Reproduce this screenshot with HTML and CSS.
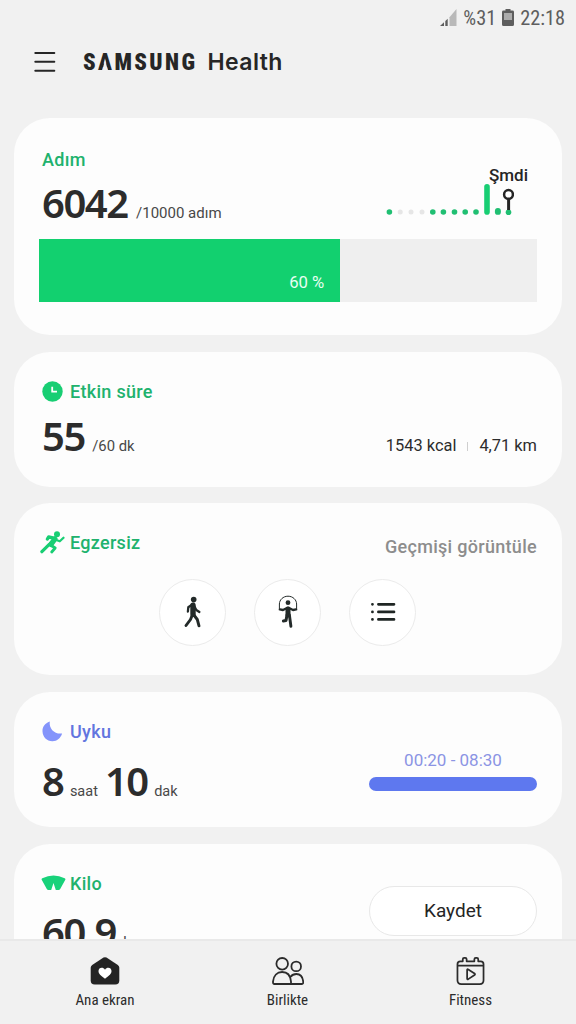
FILE: index.html
```html
<!DOCTYPE html>
<html lang="tr">
<head>
<meta charset="utf-8">
<title>Samsung Health</title>
<link rel="stylesheet" href="styles.css">
</head>
<body>
<div class="app">
  <div class="status">
    <svg class="signal" width="18" height="18" viewBox="0 0 18 18"><path d="M0 17L4 13.3V17Z" fill="#5e5e5e"/><path d="M5.3 12L7.7 9.7V17H5.3Z" fill="#5e5e5e"/><path d="M9.5 8.2L16.5 0V17H9.5Z" fill="#b9b9b9"/></svg>
    <span class="status-text">%31</span>
    <svg class="battery" width="12" height="17" viewBox="0 0 12 17"><path d="M3.5 1.6V0H8.5V1.6H10.5Q12 1.6 12 3V15.4Q12 17 10.5 17H1.5Q0 17 0 15.4V3Q0 1.6 1.5 1.6Z" fill="#5e5e5e"/><rect x="2" y="4" width="8" height="7" fill="#acacac"/></svg>
    <span class="status-text">22:18</span>
  </div>

  <header class="header">
    <svg width="22" height="20" viewBox="0 0 22 20" fill="none" stroke="#262626" stroke-width="2" stroke-linecap="round"><path d="M1.3 1H20.3M1.3 9.8H20.3M1.3 18.7H20.3"/></svg>
    <h1 class="logo"><span class="brand">S<span class="peak">A</span>MSUNG</span><span class="product">Health</span></h1>
  </header>

  <main class="cards">
    <section class="card steps">
      <div class="steps-top">
        <div>
          <h2 class="title green">Adım</h2>
          <div class="value"><b class="num">6042</b><span class="unit goal">/10000 adım</span></div>
        </div>
        <div class="trend">
          <span class="now">Şmdi</span>
          <svg width="130" height="34" viewBox="0 0 130 34"><g fill="#20bf72"><circle cx="5.4" cy="28" r="2.8"/><circle cx="48.8" cy="28" r="2.8"/><circle cx="59.4" cy="28" r="2.8"/><circle cx="70.5" cy="28" r="2.8"/><circle cx="81.2" cy="28" r="2.8"/><circle cx="92" cy="28" r="2.8"/><rect x="100.2" y="0" width="5.6" height="30.7" rx="2.8" fill="#18ce73"/><rect x="110.9" y="24" width="6" height="6.8" rx="2.9"/><circle cx="124.5" cy="28.3" r="2.8"/></g><g fill="#e6e6e6"><circle cx="16.2" cy="28" r="2.5"/><circle cx="27" cy="28" r="2.5"/><circle cx="38" cy="28" r="2.5"/></g><path d="M124.6 15V26" stroke="#252525" stroke-width="3"/><circle cx="124.5" cy="10.4" r="4.4" fill="#fff" stroke="#252525" stroke-width="2.5"/></svg>
        </div>
      </div>
      <div class="progress"><div class="fill" style="width:60.4%">60 %</div></div>
    </section>

    <section class="card active">
      <h2 class="title green"><svg width="21" height="21" viewBox="0 0 21 21"><circle cx="10.5" cy="10.5" r="10.2" fill="#18ce73"/><path d="M10.2 5.7V10.6H15" fill="none" stroke="#fff" stroke-width="1.8"/></svg><span>Etkin süre</span></h2>
      <div class="line">
        <div class="value"><b class="num">55</b><span class="unit">/60 dk</span></div>
        <div class="stats"><span>1543 kcal</span><i></i><span>4,71 km</span></div>
      </div>
    </section>

    <section class="card exercise">
      <div class="line ex-head">
        <h2 class="title green"><svg class="run" width="25" height="23" viewBox="0 0 25 23" fill="none" stroke="#18ce73" stroke-linecap="round" stroke-linejoin="round"><circle cx="17" cy="3.2" r="3" fill="#18ce73" stroke="none"/><path d="M14.7 7.2L9.5 13.2L1.9 20.7" stroke-width="3.2"/><path d="M15 8L11 13.5" stroke-width="5"/><path d="M10.5 14L15.2 17L11.7 21" stroke-width="2.8"/><path d="M15.5 8.8L19.8 10.3L23.5 6.7" stroke-width="2.2"/><path d="M14 7.2L8.6 6L7.4 8" stroke-width="3.4"/></svg><span>Egzersiz</span></h2>
        <span class="history">Geçmişi görüntüle</span>
      </div>
      <div class="actions">
        <div class="round"><svg width="20" height="34" viewBox="0 0 20 34" fill="none" stroke="#232a29" stroke-linecap="round" stroke-linejoin="round"><circle cx="10.7" cy="4.6" r="2.8" fill="#232a29" stroke="none"/><path d="M10 10.2V19" stroke-width="5.4"/><path d="M9 9.6L5.3 12.3L4.9 16.5M11.5 11.5L13.3 15L16.4 17" stroke-width="2.3"/><path d="M9.5 19.5L7.5 24.5L3 30.5M10.5 19.5L14.3 24.5L16 30.8" stroke-width="2.9"/></svg></div>
        <div class="round"><svg width="20" height="34" viewBox="0 0 20 34" fill="none" stroke="#232a29" stroke-linecap="round" stroke-linejoin="round"><circle cx="10" cy="7.7" r="2.4" fill="#232a29" stroke="none"/><path d="M1.4 13.5V9C1.4 5 5 1.2 10 1.2S18.6 5 18.6 9V13.5" stroke-width="1"/><path d="M1.8 14.4L5 15L9 12.9H11L15 15L18.2 14.4" stroke-width="2.3"/><path d="M10 14V20" stroke-width="5"/><path d="M9 20L8 25.6L5.4 26" stroke-width="3"/><path d="M11.4 20L12.9 31.3" stroke-width="2.9"/></svg></div>
        <div class="round"><svg width="26" height="20" viewBox="0 0 26 20" fill="none" stroke="#1f2624" stroke-width="2.7" stroke-linecap="round"><path d="M8.4 2.3H24M8.4 9.9H24M8.4 17.4H24M2.4 2.3H2.5M2.4 9.9H2.5M2.4 17.4H2.5"/></svg></div>
      </div>
    </section>

    <section class="card sleep">
      <h2 class="title blue"><svg width="21" height="21" viewBox="0 0 21 21"><path d="M7.8 .5C2.8 2.2 .3 6 .5 10.4C.8 16 4.8 20 10.3 20.2C15 20.3 18.7 17.1 20.1 12.5C12.8 13.5 6.7 8 7.8 .5Z" fill="#8494fb"/></svg><span>Uyku</span></h2>
      <div class="line">
        <div class="value"><b class="num">8</b><span class="unit">saat</span><b class="num ten">10</b><span class="unit">dak</span></div>
        <div class="range"><span>00:20 - 08:30</span><div class="sleepbar"></div></div>
      </div>
    </section>

    <section class="card weight">
      <div>
        <h2 class="title green"><svg class="scale" width="25" height="16" viewBox="0 0 25 16"><path d="M.7 4.7Q.2 3.8 1.3 3.2Q12.5-2.2 23.7 3.2Q24.8 3.8 24.3 4.7L19.2 14Q18.6 15 17.6 15H14.8L12.5 8L10.2 15H7.4Q6.4 15 5.8 14Z" fill="#18d27a"/></svg><span>Kilo</span></h2>
        <div class="value"><b class="num">60,9</b><span class="unit">kg</span></div>
      </div>
      <button class="save">Kaydet</button>
    </section>
  </main>

  <nav class="nav">
    <div class="tab"><svg width="30" height="28" viewBox="0 0 30 28"><path d="M13.5 .6Q15 -.3 16.5 .6L27.8 8Q29.3 9 29.3 10.7V23.5Q29.3 27.5 25.3 27.5H4.7Q.7 27.5 .7 23.5V10.7Q.7 9 2.2 8Z" fill="#242424"/><path d="M15 21.7C10.5 18.6 8.5 16.8 8.5 14.1C8.5 10.5 13 9.5 15 12.8C17 9.5 21.5 10.5 21.5 14.1C21.5 16.8 19.5 18.6 15 21.7Z" fill="#fff"/></svg><span>Ana ekran</span></div>
    <div class="tab"><svg width="32" height="28" viewBox="0 0 32 28" fill="none" stroke="#2b2b2b" stroke-width="1.8" stroke-linejoin="round"><circle cx="10.2" cy="6.8" r="5.8"/><circle cx="24.2" cy="9.4" r="4.8"/><path d="M2.5 27H30Q31.4 27 31.2 24.6C30.7 19.6 27.9 17 24.4 17Q20.8 17 18.3 20M2.5 27Q.8 27 1 24.6C1.5 18.6 5.1 15 10.1 15C15.3 15 18.5 18.6 19 24.6V27"/></svg><span>Birlikte</span></div>
    <div class="tab"><svg width="29" height="29" viewBox="0 0 29 29" fill="none" stroke="#2b2b2b" stroke-width="1.8" stroke-linejoin="round"><path d="M10.5 4.5H18.5V2.3Q18.5 1 20 1H21Q22.5 1 22.5 2.3V4.5H25Q28 4.5 28 7.5V24Q28 28 24 28H5Q1 28 1 24V7.5Q1 4.5 4 4.5H6.5V2.3Q6.5 1 8 1H9Q10.5 1 10.5 2.3ZM1 9H28M11 13.5Q11 12.2 12.2 12.9L18.7 17Q19.7 17.8 18.7 18.6L12.2 22.9Q11 23.5 11 22.2Z"/></svg><span>Fitness</span></div>
  </nav>
</div>
</body>
</html>
```
FILE: styles.css
```css
* { box-sizing: border-box; }
body { margin: 0; background: #f1f1f1; font-family: Roboto, "Liberation Sans", sans-serif; color: #2c2c2c; }
svg { display: block; flex: none; }
h1, h2 { margin: 0; }
.app { width: 576px; height: 1024px; overflow: hidden; display: flex; flex-direction: column; }

.status { height: 36px; padding: 0 11px 0 0; display: flex; align-items: center; justify-content: flex-end; color: #5e5e5e; flex: none; }
.status-text { font-family: "Roboto Condensed", Roboto, sans-serif; font-stretch: 75%; font-size: 20.3px; line-height: 24px; white-space: nowrap; }
.signal { margin: -1px 5px 0 0; }
.battery { margin: -1px 6px 0 6px; }

.header { height: 82px; flex: none; padding: 15px 0 0 34px; display: flex; align-items: flex-start; }
.header svg { margin-top: 1px; }
.logo { display: flex; align-items: baseline; margin-left: 27px; line-height: 24px; font-size: 22px; margin-top: -1px; color: #262626; }
.brand { font-family: Roboto, sans-serif; font-weight: 900; font-stretch: 87%; font-size: 23px; letter-spacing: 2.4px; width: 124.5px; }
/* the wordmark's A has no crossbar */
.peak { position: relative; }
.peak::after { content: ""; position: absolute; left: 4px; bottom: 5px; width: 6px; height: 11px; background: #f1f1f1; clip-path: polygon(50% 0, 100% 100%, 0 100%); }
.product { font-family: Inter, sans-serif; font-weight: 600; font-size: 23px; letter-spacing: .4px; }

.cards { flex: 1; min-height: 0; overflow: hidden; padding: 0 14px; display: flex; flex-direction: column; gap: 17px; }
.card { flex: none; background: #fdfdfd; border-radius: 36px; padding: 30px 25px 0 28px; }
.steps { height: 217px; padding-top: 32px; }
.active { height: 135px; }
.exercise { height: 172px; margin-top: -1px; }
.sleep { height: 135px; }
.weight { height: 135px; display: flex; justify-content: space-between; }

.title { display: flex; align-items: center; height: 20px; font-size: 18px; line-height: 20px; font-weight: 500; letter-spacing: .3px; white-space: nowrap; }
.title svg { margin: -2px 7px 0 0; }
.title .run { margin: -2px 5px 0 -2px; }
.title .scale { margin: -3px 4px 0 -1px; }
.green { color: #20b26d; }
.blue { color: #6275df; }

.line { display: flex; justify-content: space-between; }
.value { display: flex; align-items: baseline; height: 44px; margin-top: 12px; white-space: nowrap; }
.num { font-family: "Noto Sans", sans-serif; font-weight: 600; font-size: 40px; line-height: 44px; letter-spacing: -1.5px; }
.ten { margin-left: 7px; }
.unit { font-size: 14.8px; color: #484848; margin-left: 7.5px; }
.goal { font-size: 15px; margin-left: 8.5px; }
.steps .value { margin-top: 11px; }
.sleep .unit { font-size: 14.5px; margin-left: 6.5px; }
.sleep .value { margin-top: 17px; }
.weight .value { margin-top: 16px; }

.steps-top { display: flex; justify-content: space-between; height: 89px; }
.trend { width: 153px; padding-top: 16px; }
.now { display: block; font-weight: 500; font-size: 17px; line-height: 18px; padding-left: 105px; color: #252525; }
.progress { margin-left: -3px; height: 63px; background: #efefef; }
.fill { height: 63px; background: #12d06f; color: #e9fff3; font-size: 16.7px; line-height: 20px; text-align: right; padding: 34px 15.5px 0 0; }

.stats { display: flex; align-items: center; font-size: 16.4px; height: 20px; margin-top: 33px; color: #2c2c2c; }
.stats i { width: 1px; height: 9px; background: #cfcfcf; margin: 2px 11px 0; }

.history { font-size: 18px; font-weight: 500; line-height: 20px; letter-spacing: .3px; color: #8d8d8d; margin-top: 4px; }
.ex-head { height: 46px; }
.actions { display: flex; justify-content: center; gap: 28px; margin-right: 4px; }
.round { width: 67px; height: 67px; border-radius: 50%; border: 1px solid #ebebeb; background: #fff; display: flex; align-items: center; justify-content: center; }
.round svg { margin-top: -1px; }

.range { width: 168px; text-align: center; color: #8b94e4; font-size: 17px; line-height: 20px; padding-top: 8px; white-space: nowrap; }
.sleepbar { height: 14px; border-radius: 7px; background: #5e78ef; margin-top: 7px; }

.save { width: 168px; height: 50px; margin-top: 12px; border: 1px solid #e8e8e8; border-radius: 25px; background: #fff; font: 400 19px Roboto, sans-serif; color: #252525; padding: 0 0 1px; }

.nav { flex: none; height: 85px; border-top: 2px solid #e9e9e9; background: #f1f1f1; padding: 0 14px; display: grid; grid-template-columns: 182px 183px 183px; }
.tab { display: flex; flex-direction: column; align-items: center; padding-top: 16px; font-family: "Roboto Condensed", Roboto, sans-serif; font-stretch: 75%; font-size: 15px; color: #2c2c2c; white-space: nowrap; }
.tab svg { height: 28px; }
.tab span { line-height: 18px; margin-top: 6px; }
```
